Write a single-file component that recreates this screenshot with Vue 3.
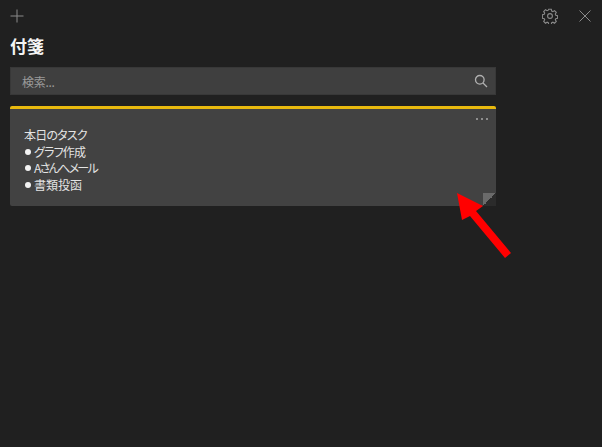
<script setup>
const lines = [
  { text: '本日のタスク', dot: false, track: -0.8 },
  { text: 'グラフ作成', dot: true, track: -0.8 },
  { text: 'Aさんへメール', dot: true, track: -1.7 },
  { text: '書類投函', dot: true, track: 0 },
]
</script>

<template>
  <div class="win">
    <header class="top">
      <svg class="ico plus" width="16" height="16" viewBox="0 0 16 16"><path d="M8 1.500V14.500M1.500 8H14.500" /></svg>
      <div class="right">
        <svg class="ico gear" width="16" height="16" viewBox="0 0 16 16">
          <circle cx="8" cy="8" r="2.400" />
          <path d="M6.700 1.300h2.600l.4 1.800 1.200.5 1.600-1 1.800 1.800-1 1.600.5 1.200 1.800.4v2.600l-1.800.4-.5 1.200 1 1.600-1.800 1.800-1.600-1-1.200.5-.4 1.800H6.700l-.4-1.800-1.200-.5-1.600 1-1.800-1.800 1-1.600-.5-1.200-1.800-.4V6.700l1.800-.4.5-1.200-1-1.600 1.800-1.800 1.600 1 1.200-.5z" />
        </svg>
        <svg class="ico close" width="14" height="14" viewBox="0 0 14 14"><path d="M1.500 1.500L12.500 12.500M12.500 1.500L1.500 12.500" /></svg>
      </div>
    </header>
    <h1 class="title">付箋</h1>
    <div class="search">
      <span class="ph">検索...</span>
      <svg class="ico mag" width="14" height="14" viewBox="0 0 14 14"><circle cx="5.800" cy="5.800" r="4.300" /><path d="M9 9L13 13" /></svg>
    </div>
    <article class="note">
      <div class="dots"><i></i><i></i><i></i></div>
      <div class="body">
        <div v-for="l in lines" :key="l.text" class="line" :style="{ letterSpacing: l.track + 'px' }">
          <span v-if="l.dot" class="bullet"></span>{{ l.text }}
        </div>
      </div>
      <div class="fold"></div>
    </article>
    <svg class="arrow" width="602" height="447" viewBox="0 0 602 447">
      <polygon points="457,193 483,206 476,211 511,253 505,258 470,216 462,220" fill="#ff0000" />
    </svg>
  </div>
</template>

<style>
html, body { margin: 0; background: #202020; }
</style>

<style scoped>
.win {
  position: relative;
  width: 602px;
  height: 447px;
  box-sizing: border-box;
  padding: 0 106px 0 10px;
  background: #202020;
  overflow: hidden;
  font-family: "Noto Sans CJK JP", "Liberation Sans", sans-serif;
}
.top {
  height: 32px;
  margin-right: -96px;
  margin-left: -1px;
  display: flex;
  align-items: center;
  justify-content: space-between;
}
.ico { fill: none; stroke: #8a8a8a; stroke-width: 1; display: block; }
.right { display: flex; align-items: center; gap: 20px; }
.gear { stroke-width: 1.100; }
.title {
  margin: 2px 0 0;
  height: 33px;
  font-size: 17px;
  line-height: 24px;
  font-weight: 700;
  color: #f4f4f4;
}
.search {
  height: 28px;
  box-sizing: border-box;
  display: flex;
  align-items: center;
  justify-content: space-between;
  padding: 0 7px 0 11px;
  background: #3f3f3f;
  border: 1px solid #383838;
}
.ph { font-size: 12px; letter-spacing: -.3px; color: #9a9a9a; }
.mag { stroke: #b0b0b0; stroke-width: 1.300; }
.note {
  position: relative;
  margin-top: 11px;
  height: 100px;
  box-sizing: border-box;
  background: #424242;
  border-top: 3px solid #e8b90e;
  border-radius: 2px;
  padding: 18px 14px 0;
}
.dots {
  position: absolute;
  top: 9px;
  right: 8px;
  display: flex;
  gap: 3px;
}
.dots i { width: 2px; height: 2px; background: #a8a8a8; border-radius: 50%; }
.body {
  font-size: 12px;
  font-feature-settings: "palt";
  line-height: 16.500px;
  color: #e4e4e4;
}
.line { display: flex; align-items: center; height: 16.500px; white-space: nowrap; }
.bullet {
  flex: none;
  width: 6px;
  height: 6px;
  margin: 0 3px 0 1px;
  background: #f2f2f2;
  border-radius: 50%;
}
.fold {
  position: absolute;
  right: 0;
  bottom: 0;
  width: 13px;
  height: 13px;
  background: linear-gradient(135deg, #6a6a6a 50%, #2b2b2b 50%);
}
.arrow { position: absolute; left: 0; top: 0; pointer-events: none; }
</style>
